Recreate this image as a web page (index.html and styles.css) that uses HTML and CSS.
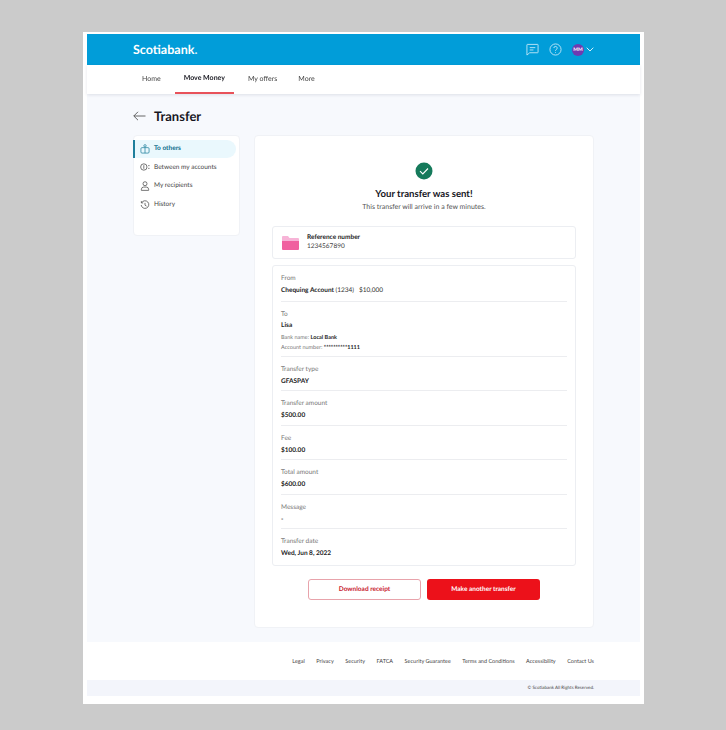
FILE: index.html
```html
<!DOCTYPE html>
<html lang="en">
<head>
<meta charset="utf-8">
<title>Transfer</title>
<link rel="stylesheet" href="styles.css">
</head>
<body>
<div class="frame">
  <header class="topbar">
    <div class="logo">Scotiabank<span class="logo-dot">.</span></div>
    <div class="top-icons">
      <svg class="ti" width="13" height="13" viewBox="0 0 14 14" fill="none" stroke="#bfe6f7" stroke-width="1"><path d="M1.500 1.500h11a.5.5 0 0 1 .5.5v8a.5.5 0 0 1-.5.5H4L1 13V2a.5.5 0 0 1 .5-.5z"/><path d="M4 5h6M4 7.500h4"/></svg>
      <svg class="ti" width="13" height="13" viewBox="0 0 14 14" fill="none" stroke="#bfe6f7" stroke-width="1"><circle cx="7" cy="7" r="6"/><path d="M5.200 5.400a1.800 1.800 0 1 1 2.600 1.700c-.6.3-.8.7-.8 1.300"/><path d="M7 9.800v.8"/></svg>
      <div class="user">
        <span class="avatar">MM</span>
        <svg width="8" height="5" viewBox="0 0 8 5" fill="none" stroke="#d5effa" stroke-width="1"><path d="M.7.7 4 4 7.300.7"/></svg>
      </div>
    </div>
  </header>
  <nav class="mainnav">
    <a class="nav-item">Home</a>
    <a class="nav-item active">Move Money</a>
    <a class="nav-item">My offers</a>
    <a class="nav-item nav-last">More</a>
  </nav>
  <main class="page">
    <div class="title-row">
      <svg width="13" height="10" viewBox="0 0 13 10" fill="none" stroke="#555" stroke-width=".9"><path d="M12.500 5H.8M5 .8.8 5 5 9.200"/></svg>
      <h1>Transfer</h1>
    </div>
    <div class="columns">
      <aside class="side">
        <a class="side-item current">
          <svg width="11" height="11" viewBox="0 0 11 11" fill="none" stroke="#1f7f9c" stroke-width=".8"><rect x="1" y="4" width="9" height="6" rx="1.200"/><path d="M5.500 4v6"/><circle cx="5.500" cy="2" r="1.300"/></svg>
          <span>To others</span>
        </a>
        <a class="side-item">
          <svg width="11" height="11" viewBox="0 0 11 11" fill="none" stroke="#444" stroke-width=".8"><circle cx="4.200" cy="5.500" r="3.500"/><path d="M4.200 3.500v4M9 4h1.500M9 7h1.500"/></svg>
          <span>Between my accounts</span>
        </a>
        <a class="side-item">
          <svg width="11" height="11" viewBox="0 0 11 11" fill="none" stroke="#444" stroke-width=".8"><circle cx="5.500" cy="3" r="2.200"/><path d="M1.500 10.300V9a2.500 2.500 0 0 1 2.500-2.300h3A2.500 2.500 0 0 1 9.500 9v1.300z"/></svg>
          <span>My recipients</span>
        </a>
        <a class="side-item">
          <svg width="11" height="11" viewBox="0 0 11 11" fill="none" stroke="#444" stroke-width=".8"><path d="M1.800 3a4.200 4.200 0 1 1-.5 2.500"/><path d="M1.500 1.200V3.200h2M5.500 3.200v2.500l1.700 1"/></svg>
          <span>History</span>
        </a>
      </aside>
      <section class="main-card">
        <div class="check">
          <svg width="18" height="18" viewBox="0 0 18 18"><circle cx="9" cy="9" r="8.500" fill="#157a5b"/><path d="M5 9.200 7.800 12 13 6.500" fill="none" stroke="#fff" stroke-width="1.100"/></svg>
        </div>
        <h2>Your transfer was sent!</h2>
        <p class="sub">This transfer will arrive in a few minutes.</p>
        <div class="ref-card">
          <svg width="17" height="14" viewBox="0 0 17 14"><path d="M0 1a1 1 0 0 1 1-1h5l1.500 2H16a1 1 0 0 1 1 1v2H0z" fill="#f7b4d7"/><path d="M0 5h17v8a1 1 0 0 1-1 1H1a1 1 0 0 1-1-1z" fill="#f0609f"/></svg>
          <div class="ref-text">
            <div class="ref-title">Reference number</div>
            <div class="ref-num">1234567890</div>
          </div>
        </div>
        <div class="details">
          <div class="row">
            <div class="label">From</div>
            <div class="value">Chequing Account <span class="plain">(1234) &nbsp; $10,000</span></div>
          </div>
          <div class="row row-to">
            <div class="label">To</div>
            <div class="value">Lisa</div>
            <div class="mini"><span class="mini-k">Bank name:</span> <b>Local Bank</b></div>
            <div class="mini"><span class="mini-k">Account number:</span> <b>**********1111</b></div>
          </div>
          <div class="row"><div class="label">Transfer type</div><div class="value">GFASPAY</div></div>
          <div class="row"><div class="label">Transfer amount</div><div class="value">$500.00</div></div>
          <div class="row"><div class="label">Fee</div><div class="value">$100.00</div></div>
          <div class="row"><div class="label">Total amount</div><div class="value">$600.00</div></div>
          <div class="row"><div class="label">Message</div><div class="value">-</div></div>
          <div class="row"><div class="label">Transfer date</div><div class="value">Wed, Jun 8, 2022</div></div>
        </div>
        <div class="actions">
          <a class="btn btn-ghost">Download receipt</a>
          <a class="btn btn-solid">Make another transfer</a>
        </div>
      </section>
    </div>
  </main>
  <footer class="foot">
    <div class="foot-links">
      <a>Legal</a><a>Privacy</a><a>Security</a><a>FATCA</a><a>Security Guarantee</a><a>Terms and Conditions</a><a>Accessibility</a><a>Contact Us</a>
    </div>
    <div class="copy">© Scotiabank All Rights Reserved.</div>
  </footer>
</div>
</body>
</html>
```
FILE: styles.css
```css
* { box-sizing: border-box; }
html, body { margin: 0; padding: 0; }
body {
  background: #cbcbcb;
  font-family: "Lato", "Noto Sans", sans-serif;
  color: #1c1c24;
  height: 730px;
  overflow: hidden;
  text-rendering: geometricPrecision;
}
h1, h2, p { margin: 0; }

.frame {
  width: 561px;
  height: 672px;
  margin: 32px 0 0 83px;
  padding: 2px 4px 8px;
  background: #fff;
  display: flex;
  flex-direction: column;
  float: left;
  opacity: .999;
  will-change: opacity;
}

.topbar {
  height: 31px;
  background: #009dd9;
  display: flex;
  align-items: center;
  justify-content: space-between;
  padding: 0 46px;
  flex: none;
}
.logo { color: #fff; font-size: 12.500px; font-weight: 700; }
.logo-dot { color: #d9f2fb; }
.top-icons { display: flex; align-items: center; gap: 10px; }
.ti { display: block; }
.user { display: flex; align-items: center; gap: 2px; }
.avatar {
  width: 12px; height: 12px; border-radius: 50%;
  background: #6f3bb0; color: #fff;
  font-size: 5px; font-weight: 700;
  display: flex; align-items: center; justify-content: center;
}

.mainnav {
  height: 29px;
  background: #fff;
  display: flex;
  padding-left: 43px;
  flex: none;
  box-shadow: 0 1px 3px rgba(30, 40, 70, .12);
  position: relative;
}
.nav-item {
  font-size: 7px;
  color: #444;
  display: flex;
  align-items: center;
  padding: 0 12px 2px;
}
.nav-item.active {
  font-weight: 700;
  color: #1c1c24;
  border-bottom: 2px solid #e8525a;
  padding: 0 9px;
  margin: 0 2px;
  height: 28.500px;
}
.nav-item.nav-last { padding-left: 9px; }

.page {
  flex: 1;
  background: #f7f9fd;
  padding: 15px 46px 14px;
  display: flex;
  flex-direction: column;
}
.title-row { display: flex; align-items: center; gap: 8px; height: 14px; margin-bottom: 12px; }
h1 { font-size: 13px; font-weight: 700; color: #16161e; }

.columns { display: flex; gap: 14px; align-items: flex-start; flex: 1; }

.side {
  width: 107px; height: 101px;
  background: #fff;
  border-radius: 4px;
  border: 1px solid #f0f2f6;
  padding: 3.500px 3px 0 0;
  display: flex; flex-direction: column;
}
.side-item {
  height: 18.600px;
  display: flex; align-items: center; gap: 4px;
  padding-left: 7px;
  margin-left: -1px;
  font-size: 6.500px; color: #444;
  border-radius: 0 10px 10px 0;
}
.side-item svg { width: 10px; height: 10px; }
.side-item.current {
  background: #eaf8fd;
  border-left: 2px solid #1f7f9c;
  padding-left: 5px;
  font-weight: 700;
  color: #0d6d8c;
}

.main-card {
  width: 340px; height: 493px;
  background: #fff;
  border-radius: 4px;
  border: 1px solid #f0f2f6;
  padding: 26px 17px 0;
  display: flex; flex-direction: column; align-items: center;
}
.check { height: 18px; }
.check svg { display: block; }
h2 { font-size: 9.600px; font-weight: 700; color: #16161e; margin-top: 8px; line-height: 13px; }
.sub { font-size: 7px; color: #555; margin-top: 1px; line-height: 10px; }

.ref-card {
  align-self: stretch;
  height: 33px;
  margin-top: 14px;
  border-radius: 3px;
  border: 1px solid #eceef2;
  display: flex; align-items: center;
  padding-left: 9px;
  gap: 8px;
}
.ref-title { font-size: 6.500px; font-weight: 700; line-height: 9px; color: #1c1c24; }
.ref-num { font-size: 6.500px; line-height: 10px; color: #444; }

.details {
  align-self: stretch;
  height: 301px;
  margin-top: 6px;
  border-radius: 3px;
  border: 1px solid #eceef2;
  padding: 8px 8px 0;
}
.row {
  height: 34.400px;
  border-bottom: 1px solid #ecedf0;
  padding-top: 8px;
}
.row:first-child { height: 28px; padding-top: 0; }
.row.row-to { height: 55px; }
.row:last-child { border-bottom: 0; }
.label { font-size: 6.500px; color: #777; line-height: 10px; }
.value { font-size: 6.500px; font-weight: 700; color: #1c1c24; line-height: 10px; margin-top: 2px; }
.row-to .value { margin-top: 1px; }
.plain { font-weight: 400; color: #333; }
.mini { font-size: 5.500px; line-height: 9px; margin-top: 1px; }
.value + .mini { margin-top: 3px; }
.mini-k { color: #777; }
.mini b { font-weight: 700; color: #1c1c24; }

.actions { display: flex; gap: 6px; margin-top: 13px; }
.btn {
  width: 113px; height: 21px;
  border-radius: 3px;
  display: flex; align-items: center; justify-content: center;
  font-size: 6.500px; font-weight: 700;
}
.btn-ghost { border: 1px solid #e8a3ab; color: #c8202e; background: #fff; }
.btn-solid { background: #ec111a; color: #fff; }

.foot { flex: none; height: 54px; background: #fff; display: flex; flex-direction: column; }
.foot-links {
  height: 38px;
  display: flex; align-items: center; justify-content: flex-end;
  gap: 11.500px;
  padding: 1px 46px 0 0;
  font-size: 5.500px; color: #444;
}
.copy {
  height: 16px;
  background: #f3f5fb;
  font-size: 4.500px; color: #444;
  text-align: right;
  padding-right: 46px;
  line-height: 16px;
}
```
